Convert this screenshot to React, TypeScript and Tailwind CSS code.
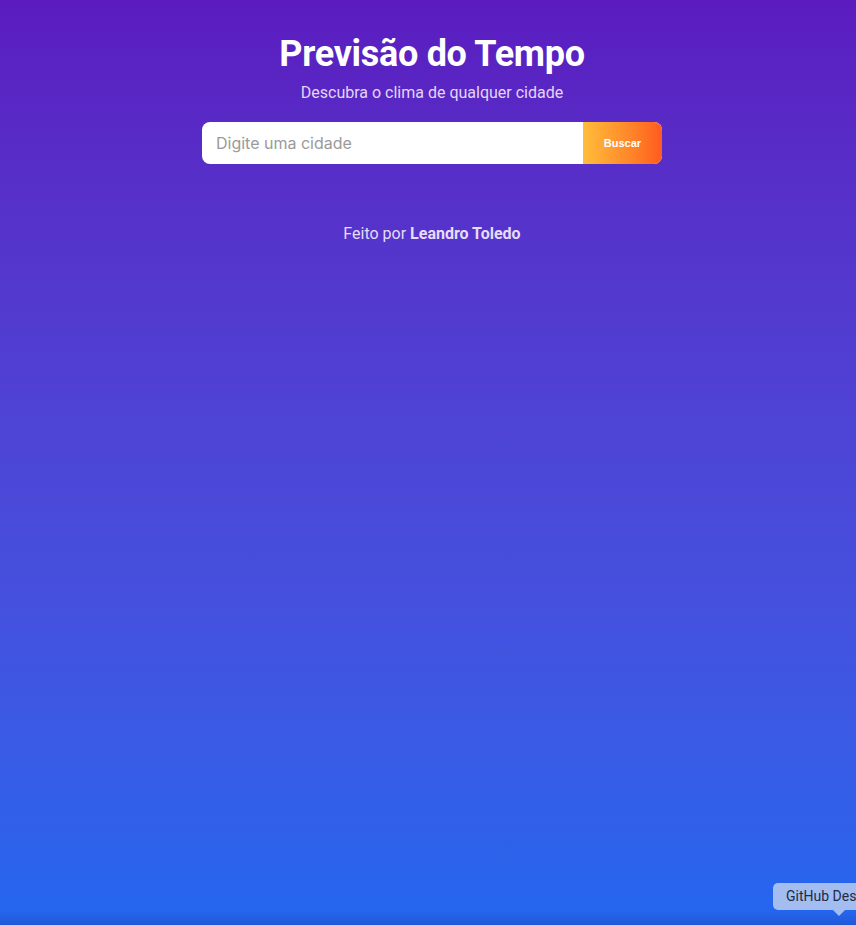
export default function App() {
  return (
    <div
      className="relative min-h-[925px] w-full overflow-hidden bg-gradient-to-b from-[#5b1bbf] to-[#2267ef] pl-[8px] text-white"
      style={{ fontFamily: "Roboto, 'Liberation Sans', sans-serif" }}
    >
      <div className="mx-auto flex w-[460px] flex-col items-center pt-[32px]">
        {/* Header */}
        <h1 className="text-[36px] font-bold leading-[44px] tracking-[-0.3px]">Previsão do Tempo</h1>
        <p className="mt-[7px] text-[16px] leading-[20px] text-[#e3d6f7]">Descubra o clima de qualquer cidade</p>

        {/* Search */}
        <form className="mt-[19px] flex h-[42px] w-full overflow-hidden rounded-[8px] bg-white" onSubmit={(e) => e.preventDefault()}>
          <input
            type="text"
            placeholder="Digite uma cidade"
            className="min-w-0 flex-1 px-[14px] text-[16px] text-gray-800 placeholder:text-[#9a9a9a] outline-none"
            style={{ fontFamily: "Inter, 'Liberation Sans', sans-serif" }}
          />
          <button
            type="submit"
            className="w-[79px] bg-gradient-to-r from-[#ffbd3a] to-[#ff5a1f] text-[11px] font-bold text-white"
            style={{ fontFamily: "'Liberation Sans', Arial, sans-serif" }}
          >
            Buscar
          </button>
        </form>

        {/* Footer */}
        <p className="mt-[60px] text-[16px] leading-[20px] text-[#e6dcf8]">
          Feito por <span className="font-bold">Leandro Toledo</span>
        </p>
      </div>

      {/* dock shadow strip */}
      <div className="absolute bottom-0 left-0 h-[14px] w-full bg-gradient-to-b from-transparent to-[#1d4fc9]/60" />

      {/* tooltip */}
      <div className="absolute bottom-[15px] left-[773px] rounded-[5px] bg-[#a3bdf0] py-[4px] pl-[13px] pr-[10px] text-[14px] leading-[19px] text-[#1f2a44] whitespace-nowrap">
        GitHub Desktop
      </div>
      <div className="absolute bottom-[9px] left-[833px] h-0 w-0 border-x-[6px] border-t-[6px] border-x-transparent border-t-[#a3bdf0]" />
    </div>
  );
}
